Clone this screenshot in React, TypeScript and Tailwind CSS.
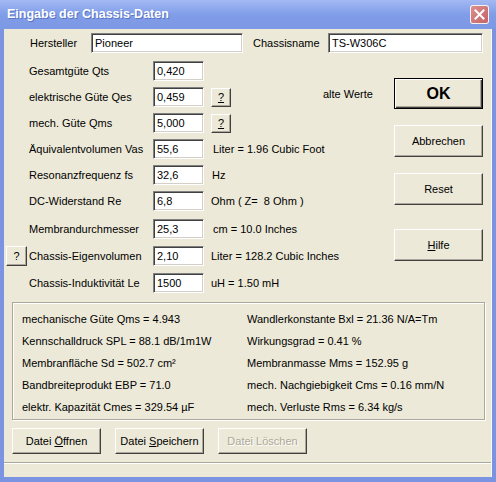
import clsx from 'clsx'
import type { ReactNode } from 'react'

const FONT = "font-['Liberation_Sans',Arial,sans-serif]"

function Field({ value, className }: { value: string; className?: string }) {
  return (
    <div
      className={clsx(
        'h-[20px] shrink-0 bg-white border border-t-[#808080] border-l-[#808080] border-b-white border-r-white shadow-[inset_1px_1px_0_#404040,inset_-1px_-1px_0_#d4d0c8] pl-[3px] pt-[2px] leading-[14px] text-black whitespace-nowrap overflow-hidden',
        className,
      )}
    >
      {value}
    </div>
  )
}

function Btn({
  children,
  className,
  isDefault,
}: {
  children: ReactNode
  className?: string
  isDefault?: boolean
}) {
  return (
    <div
      className={clsx(
        'flex shrink-0 items-center justify-center bg-[#ece9d8] text-black whitespace-nowrap',
        isDefault
          ? 'border border-black shadow-[inset_1px_1px_0_#fff,inset_-1px_-1px_0_#404040,inset_-2px_-2px_0_#aca899]'
          : 'border border-t-white border-l-white border-r-[#404040] border-b-[#404040] shadow-[inset_-1px_-1px_0_#aca899]',
        className,
      )}
    >
      {children}
    </div>
  )
}

type Row = {
  label: string
  value: string
  mt: string
  leftHelp?: boolean
  trailing?: ReactNode
}

const helpBtn = (
  <Btn className="ml-[7px] w-[20px] h-[19px]">
    <span className="underline">?</span>
  </Btn>
)

const rows: Row[] = [
  { label: 'Gesamtgüte Qts', value: '0,420', mt: 'mt-0' },
  {
    label: 'elektrische Güte Qes',
    value: '0,459',
    mt: 'mt-[6px]',
    trailing: (
      <>
        {helpBtn}
        <span className="ml-[92px] mb-[6px]">alte Werte</span>
      </>
    ),
  },
  { label: 'mech. Güte Qms', value: '5,000', mt: 'mt-[6px]', trailing: helpBtn },
  {
    label: 'Äquivalentvolumen Vas',
    value: '55,6',
    mt: 'mt-[6px]',
    trailing: <span className="ml-[9px]">Liter = 1.96 Cubic Foot</span>,
  },
  {
    label: 'Resonanzfrequenz fs',
    value: '32,6',
    mt: 'mt-[6px]',
    trailing: <span className="ml-[8px]">Hz</span>,
  },
  {
    label: 'DC-Widerstand Re',
    value: '6,8',
    mt: 'mt-[6px]',
    trailing: <span className="ml-[7px] whitespace-pre">Ohm ( Z=  8 Ohm )</span>,
  },
  {
    label: 'Membrandurchmesser',
    value: '25,3',
    mt: 'mt-[8px]',
    trailing: <span className="ml-[9px]">cm = 10.0 Inches</span>,
  },
  {
    label: 'Chassis-Eigenvolumen',
    value: '2,10',
    mt: 'mt-[7px]',
    leftHelp: true,
    trailing: <span className="ml-[7px]">Liter = 128.2 Cubic Inches</span>,
  },
  {
    label: 'Chassis-Induktivität Le',
    value: '1500',
    mt: 'mt-[7px]',
    trailing: <span className="ml-[7px]">uH = 1.50 mH</span>,
  },
]

const results: [string, ReactNode][] = [
  ['mechanische Güte Qms = 4.943', 'Wandlerkonstante Bxl = 21.36 N/A=Tm'],
  ['Kennschalldruck SPL = 88.1 dB/1m1W', 'Wirkungsgrad = 0.41 %'],
  [
    'Membranfläche Sd = 502.7 cm²',
    'Membranmasse Mms = 152.95 g',
  ],
  ['Bandbreiteprodukt EBP = 71.0', 'mech. Nachgiebigkeit Cms = 0.16 mm/N'],
  ['elektr. Kapazität Cmes = 329.54 µF', 'mech. Verluste Rms = 6.34 kg/s'],
]

export default function App() {
  return (
    <div className={clsx('w-[496px] h-[482px] flex flex-col bg-[#7a94e1] text-[11px] text-black', FONT)}>
      {/* title bar */}
      <div className="h-[29px] shrink-0 flex items-center pl-[7px] pr-[7px] bg-gradient-to-b from-[#a3b9f3] via-[#809de8] to-[#7d98e4]">
        <span className="font-bold text-[12.5px] text-white [text-shadow:1px_1px_0_#5a74c2] pb-[1px]">
          Eingabe der Chassis-Daten
        </span>
        <div className="ml-auto mb-[1px] w-[19px] h-[19px] rounded-[3px] border border-white/90 bg-gradient-to-br from-[#dc8f8f] to-[#c46366] flex items-center justify-center">
          <svg width="11" height="11" viewBox="0 0 11 11">
            <path d="M1.5 1.5 L9.5 9.5 M9.5 1.5 L1.5 9.5" stroke="#fff" strokeWidth="2" strokeLinecap="square" />
          </svg>
        </div>
      </div>

      {/* client */}
      <div className="flex-1 mx-[4px] mb-[5px] bg-[#ece9d8] flex flex-col border-r border-r-white/70">
        {/* manufacturer row */}
        <div className="mt-[4px] flex items-center h-[20px]">
          <span className="ml-[26px] w-[61px] shrink-0">Hersteller</span>
          <Field value="Pioneer" className="w-[152px]" />
          <span className="ml-[10px] w-[75px] shrink-0">Chassisname</span>
          <Field value="TS-W306C" className="w-[155px]" />
        </div>

        {/* parameters */}
        <div className="mt-[8px] flex">
          <div className="flex-1 flex flex-col">
            {rows.map((r) => (
              <div key={r.label} className={clsx('flex items-center h-[20px]', r.mt)}>
                <div className="w-[25px] shrink-0">
                  {r.leftHelp && <Btn className="ml-[2px] w-[21px] h-[20px]">?</Btn>}
                </div>
                <span className="w-[124px] shrink-0 whitespace-nowrap">{r.label}</span>
                <Field value={r.value} className="w-[51px]" />
                {r.trailing}
              </div>
            ))}
          </div>
          <div className="w-[89px] mr-[8px] shrink-0 flex flex-col">
            <Btn isDefault className="mt-[17px] h-[31px] text-[16px] font-bold">
              OK
            </Btn>
            <Btn className="mt-[16px] h-[32px]">Abbrechen</Btn>
            <Btn className="mt-[16px] h-[32px]">Reset</Btn>
            <Btn className="mt-[24px] h-[32px]">
              <span>
                <span className="underline">H</span>ilfe
              </span>
            </Btn>
          </div>
        </div>

        {/* results */}
        <div className="mt-[9px] ml-[8px] w-[473px] h-[118px] border border-[#aca899] shadow-[inset_1px_1px_0_#fff,1px_1px_0_#fff] pt-[5px] flex flex-col">
          {results.map(([a, b], i) => (
            <div key={i} className="h-[22px] flex items-center">
              <span className="ml-[9px] w-[225px] shrink-0 whitespace-nowrap">{a}</span>
              <span className="whitespace-nowrap">{b}</span>
            </div>
          ))}
        </div>

        {/* file buttons */}
        <div className="mt-[8px] ml-[8px] flex gap-[14px]">
          <Btn className="w-[89px] h-[26px]">
            <span>
              Datei <span className="underline">Ö</span>ffnen
            </span>
          </Btn>
          <Btn className="w-[89px] h-[26px]">
            <span>
              Datei <span className="underline">S</span>peichern
            </span>
          </Btn>
          <Btn className="w-[89px] h-[26px]">
            <span className="text-[#aca899] [text-shadow:1px_1px_0_#fff]">Datei Löschen</span>
          </Btn>
        </div>

        <div className="mt-[8px] border-t border-t-[#aca899] border-b border-b-white" />
      </div>
    </div>
  )
}
